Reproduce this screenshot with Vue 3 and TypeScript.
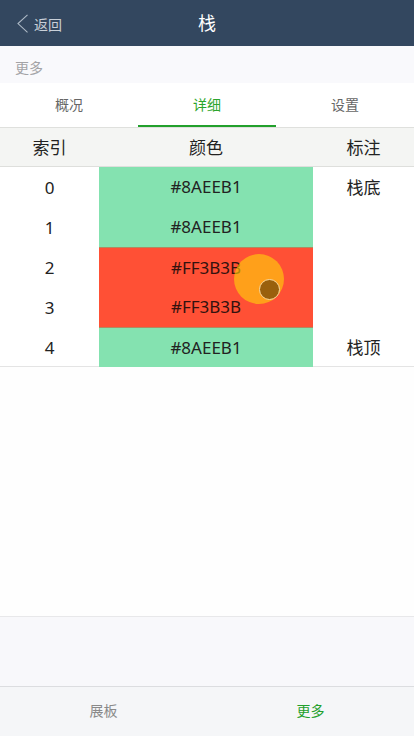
<script setup lang="ts">
interface Row { i: number; color: string; hex: string; note: string }
const rows: Row[] = [
  { i: 0, color: '#84e2b0', hex: '#8AEEB1', note: '栈底' },
  { i: 1, color: '#84e2b0', hex: '#8AEEB1', note: '' },
  { i: 2, color: '#ff5035', hex: '#FF3B3B', note: '' },
  { i: 3, color: '#ff5035', hex: '#FF3B3B', note: '' },
  { i: 4, color: '#84e2b0', hex: '#8AEEB1', note: '栈顶' },
]
</script>

<template>
  <div class="page">
    <header class="nav">
      <div class="back">
        <svg class="chev" width="12" height="20" viewBox="0 0 12 20"><path d="M10.500 0.800 L1 9.600 L10.500 18.400" fill="none" stroke="#aebac6" stroke-width="1.100"/></svg>
        <span>返回</span>
      </div>
      <div class="title">栈</div>
    </header>
    <div class="crumb">更多</div>
    <nav class="tabs">
      <div class="tab">概况</div>
      <div class="tab active">详细</div>
      <div class="tab">设置</div>
    </nav>
    <div class="thead">
      <div class="c1">索引</div>
      <div class="c2">颜色</div>
      <div class="c3">标注</div>
    </div>
    <div class="tbody">
      <div v-for="r in rows" :key="r.i" class="row">
        <div class="c1">{{ r.i }}</div>
        <div class="c2 cell" :style="{ background: r.color }">{{ r.hex }}</div>
        <div class="c3">{{ r.note }}</div>
      </div>
      <div class="touch"><div class="dot"></div></div>
    </div>
    <div class="blank"></div>
    <div class="gray"></div>
    <footer class="bottom">
      <div class="bt">展板</div>
      <div class="bt on">更多</div>
    </footer>
  </div>
</template>

<style scoped>
.page { width: 414px; height: 736px; display: flex; flex-direction: column; background: #fff; font-family: "Noto Sans", "Noto Sans CJK SC", sans-serif; overflow: hidden; }
.nav { height: 46px; background: #33475f; position: relative; display: flex; align-items: center; justify-content: center; flex: none; }
.back { position: absolute; left: 17px; top: 14px; display: flex; align-items: flex-start; gap: 5px; color: #c9d0d8; font-size: 14px; line-height: 20px; }
.chev { display: block; }
.back span { margin-top: 1px; }
.title { color: #fff; font-size: 18px; line-height: 46px; }
.crumb { height: 37px; background: #f9f9fc; color: #a3a3a6; font-size: 14px; line-height: 43px; padding-left: 15px; flex: none; box-sizing: border-box; }
.tabs { height: 44px; display: flex; flex: none; }
.tab { flex: 1; text-align: center; font-size: 14px; line-height: 44px; color: #666; box-sizing: border-box; border-bottom: 2px solid transparent; }
.tab.active { color: #2ca52c; border-bottom-color: #22a02c; }
.thead { height: 40px; display: flex; background: #f4f5f3; border-top: 1px solid #dfe0dd; border-bottom: 1px solid #dedfdc; box-sizing: border-box; font-size: 17px; line-height: 39px; color: #222; flex: none; }
.c1 { width: 99px; text-align: center; flex: none; }
.c2 { width: 214px; text-align: center; flex: none; }
.c3 { width: 101px; text-align: center; flex: none; }
.tbody { position: relative; flex: none; }
.tbody::before { content: ""; position: absolute; left: 0; right: 0; bottom: 0; height: 1px; background: #e4e4e4; }
.row { position: relative; height: 40px; display: flex; font-size: 17px; line-height: 41px; color: #222; }
.row .cell { line-height: 40px; }
.row:nth-child(3) .cell, .row:nth-child(5) .cell { border-top: 1px solid #b08a60; line-height: 40px; box-sizing: border-box; }
.cell { color: #222; }
.row:nth-child(3) .cell, .row:nth-child(4) .cell { color: #33120e; }
.touch { position: absolute; left: 233.500px; top: 86.500px; width: 50px; height: 50px; border-radius: 50%; background: rgba(255, 213, 8, 0.6); }
.dot { position: absolute; left: 25.500px; top: 25.500px; width: 19px; height: 19px; border-radius: 50%; background: #99600d; border: 1px solid #f8d9a0; }
.blank { flex: 1; background: #fefefe; }
.gray { height: 70px; background: #f8f8fb; border-top: 1px solid #e8e8ea; box-sizing: border-box; flex: none; }
.bottom { height: 50px; display: flex; background: #f5f6f8; border-top: 1px solid #dcdde0; box-sizing: border-box; flex: none; }
.bt { flex: 1; text-align: center; font-size: 14px; line-height: 48px; color: #8a8a8a; }
.bt.on { color: #22a02c; }
</style>
